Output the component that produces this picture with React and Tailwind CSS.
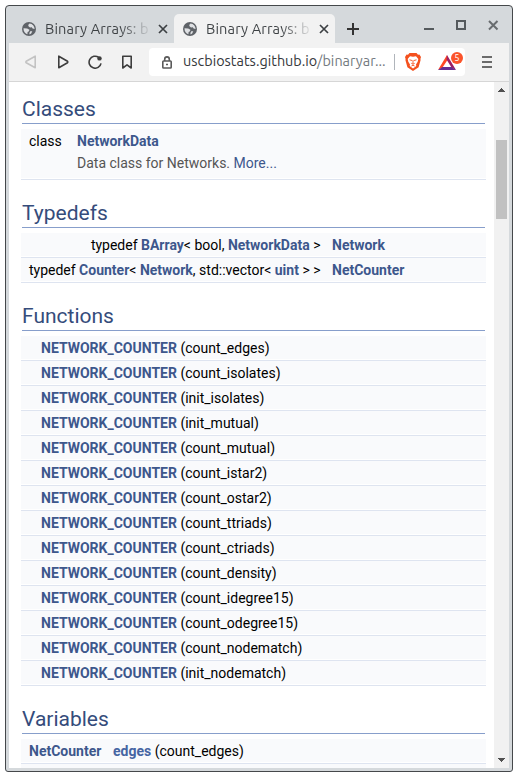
import React from "react";

const functions = [
  "count_edges", "count_isolates", "init_isolates", "init_mutual", "count_mutual",
  "count_istar2", "count_ostar2", "count_ttriads", "count_ctriads", "count_density",
  "count_idegree15", "count_odegree15", "count_nodematch", "init_nodematch",
];

function Globe() {
  return (
    <svg className="h-[14px] w-[14px] shrink-0" viewBox="0 0 14 14">
      <circle cx="7" cy="7" r="7" fill="#5f6368" />
      <path
        d="M7.500 1.500 6.200 3 6.500 4.200 8 5.400 9.800 5.300 10.600 6.600 12.600 6.900C12.500 4.400 10.600 1.700 7.500 1.500ZM1.500 6.300 5.200 6.500 7.400 7.700 7 9.300 5.600 10 5.400 12.300C3.300 11.600 1.300 9.500 1.500 6.300ZM8.200 9.200 10.300 9.300 9.200 11.600 7.600 12.500 7.400 10.900Z"
        fill="#dfe1e4"
      />
    </svg>
  );
}

function Tab({ active }) {
  return (
    <div className={"flex h-[29px] w-[161px] items-center pl-[9px] " + (active ? "rounded-t-[5px] bg-[#f2f2f2]" : "")}>
      <Globe />
      <div className="ml-[9px] w-[107px] shrink-0 whitespace-nowrap bg-linear-to-r from-[#3c4043] from-70% to-transparent to-100% bg-clip-text font-['Ubuntu','Noto_Sans',sans-serif] text-[14.6px] leading-[22px] tracking-[0.12px] text-transparent">
        Binary Arrays: b
      </div>
      <svg className="ml-[6px] h-[10px] w-[10px] shrink-0" viewBox="0 0 10 10">
        <path d="M1 1l8 8M9 1l-8 8" stroke="#3c4043" strokeWidth="1.7" />
      </svg>
    </div>
  );
}

function TitleBar() {
  return (
    <div className="flex h-[37px] shrink-0 items-end bg-[#d5d9dc] pl-[4px]">
      <Tab />
      <Tab active />
      <svg className="mb-[8px] ml-[12px] h-[12px] w-[12px]" viewBox="0 0 12 12">
        <path d="M6 0v12M0 6h12" stroke="#333" strokeWidth="2" />
      </svg>
      <svg className="mb-[12px] ml-[65px] h-[12px] w-[76px]" viewBox="0 0 76 12">
        <path d="M0 10h10" stroke="#555a5d" strokeWidth="2" />
        <rect x="33" y="2" width="8" height="8" fill="none" stroke="#555a5d" strokeWidth="2" />
        <path d="M65 2l8.500 8.500M73.500 2l-8.500 8.500" stroke="#686c6f" strokeWidth="2" />
      </svg>
    </div>
  );
}

function Toolbar() {
  return (
    <div className="flex h-[38px] shrink-0 items-center bg-[#f2f2f2] pl-[16px]">
      <svg className="h-[14px] w-[108px] shrink-0" viewBox="0 0 108 14" fill="none" strokeWidth="1.6" strokeLinejoin="round">
        <path d="M10.200 1.200V12.800L1.200 7.800Q.5 7 1.200 6.200Z" stroke="#c3c3c3" />
        <path d="M33.800 1.200V12.800L42.500 7.800Q43.200 7 42.500 6.200Z" stroke="#3e3e3e" />
        <path d="M76 8.300A6 6 0 1 1 73.700 2.400" stroke="#3e3e3e" />
        <circle cx="74.500" cy="3.400" r="2.200" fill="#3e3e3e" />
        <path d="M97.800 1.200H106.200V13L102 9.900 97.800 13Z" stroke="#3e3e3e" />
      </svg>
      <div className="ml-[16px] flex h-[28px] w-[316px] shrink-0 items-center rounded-[4px] bg-white pl-[13px]">
        <svg className="h-[13px] w-[10px] shrink-0" viewBox="0 0 10 13" fill="none" stroke="#5a5a5a" strokeWidth="1.600">
          <rect x=".8" y="5" width="8.400" height="7" rx=".8" />
          <path d="M2.700 5V3.200a2.300 2.300 0 0 1 4.600 0V5" />
          <path d="M4 8.500h2" />
        </svg>
        <div className="ml-[11px] w-[207px] shrink-0 whitespace-nowrap font-['Ubuntu','Noto_Sans',sans-serif] text-[14.4px] tracking-[0.02px] text-[#747a80]">
          <span className="text-[#35383b]">uscbiostats.github.io</span>/binaryar...
        </div>
        <div className="ml-[4px] h-[16px] w-px shrink-0 bg-[#b0b5bb]" />
        <svg className="ml-[10px] h-[18px] w-[16px] shrink-0" viewBox="0 0 16 18">
          <path d="M4.500 0h7L13 1.700l1.400-.2L16 4l-.6 2 .2 1-2 7.200L8 18l-5.600-3.800L.4 7l.2-1L0 4l1.600-2.500 1.400.2Z" fill="#f4511e" />
          <path d="M5 3.200 8 3.800 11 3.200 13.300 5.900 12.700 8.700 11 11.600 11.300 13 8 15.500 4.700 13 5 11.600 3.300 8.700 2.700 5.900Z" fill="#fff" />
          <path d="M4.500 6.800 7 7.500M11.500 6.800 9 7.500M8 7v4M6.300 10.300 8 11.300 9.700 10.300M6.400 13 8 12.200 9.600 13" stroke="#f4511e" strokeWidth=".9" fill="none" />
        </svg>
        <div className="relative ml-[17px] h-[20px] w-[26px] shrink-0">
          <svg className="h-[20px] w-[26px]" viewBox="0 0 26 20">
            <path d="M9 3 0 18 4.500 15.500 9.500 8Z" fill="#ff4724" />
            <path d="M9 3 18 18 13.500 15.500 8.500 7.500Z" fill="#9e1f63" />
            <path d="M0 18 4.300 15H13.700L18 18Z" fill="#662d91" />
          </svg>
          <div className="absolute left-[13px] top-0 flex h-[12px] w-[12px] items-center justify-center rounded-full bg-[#fb542b] font-['Noto_Sans',sans-serif] text-[8px] leading-none text-white">5</div>
        </div>
      </div>
      <div className="ml-[17px] flex w-[10px] flex-col gap-[3px]">
        <div className="h-[2px] bg-[#6b6b6b]" />
        <div className="h-[2px] bg-[#6b6b6b]" />
        <div className="h-[2px] bg-[#6b6b6b]" />
      </div>
    </div>
  );
}

function Heading({ children, first }) {
  return (
    <h2 className={"mx-px mb-[5px] border-b border-[#879ecb] pb-px text-[21px] leading-[25px] text-[#354c7b] " + (first ? "mt-[15px]" : "mt-[21px]")}>
      {children}
    </h2>
  );
}

function Row({ children, tall }) {
  return (
    <div className="border-b border-[#dee4f0] pb-px">
      <div className={"whitespace-pre bg-[#f9fafc] pt-px text-[14px] leading-[22px] " + (tall ? "h-[49px]" : "flex h-[23px]")}>{children}</div>
    </div>
  );
}

function L({ children }) {
  return <b className="font-bold text-[#3d578c]">{children}</b>;
}

function Docs() {
  return (
    <div className="h-full min-w-0 flex-1 overflow-hidden bg-white pl-[12px] pr-[8px] text-black">
      <Heading first>Classes</Heading>
      <Row tall>
        <div className="flex">
          <div className="ml-[8px] w-[48px]">class</div>
          <div>
            <L>NetworkData</L>
            <div className="text-[#555]">Data class for Networks. <span className="text-[#3d578c]">More...</span></div>
          </div>
        </div>
      </Row>
      <Heading>Typedefs</Heading>
      <Row>
        <div className="w-[299.500px] text-right">typedef <L>BArray</L>{"< bool, "}<L>NetworkData</L>{" >"}</div>
        <div className="ml-[11.500px]"><L>Network</L></div>
      </Row>
      <Row>
        <div className="w-[299.500px] text-right">typedef <L>Counter</L>{"< "}<L>Network</L>{", std::vector< "}<L>uint</L>{" > >"}</div>
        <div className="ml-[11.500px]"><L>NetCounter</L></div>
      </Row>
      <Heading>Functions</Heading>
      {functions.map((name) => (
        <Row key={name}>
          <div className="ml-[20px]"><L>NETWORK_COUNTER</L> ({name})</div>
        </Row>
      ))}
      <Heading>Variables</Heading>
      <Row>
        <div className="ml-[8px] w-[84px]"><L>NetCounter</L></div>
        <div><b className="text-[#4665a2]">edges</b> (count_edges)</div>
      </Row>
      <Row />
    </div>
  );
}

function Scrollbar() {
  return (
    <div className="flex h-full w-[15px] shrink-0 flex-col items-center bg-[#f1f1f1]">
      <svg className="mt-[6px] h-[4px] w-[7px] shrink-0" viewBox="0 0 7 4" shapeRendering="crispEdges">
        <path d="M3 0h1v1h1v1h1v1h1v1H0V3h1V2h1V1h1Z" fill="#505050" />
      </svg>
      <div className="mt-[48px] h-[79px] w-[11px] bg-[#c1c1c1]" />
      <svg className="mb-[6px] mt-auto h-[4px] w-[7px] shrink-0" viewBox="0 0 7 4" shapeRendering="crispEdges">
        <path d="M0 0h7v1H6v1H5v1H4v1H3V3H2V2H1V1H0Z" fill="#505050" />
      </svg>
    </div>
  );
}

export default function App() {
  return (
    <div className="h-[781px] w-[522px] overflow-hidden bg-white pl-[5px] pt-[5px] font-['Roboto',sans-serif]">
      <div className="flex h-[767px] w-[508px] flex-col overflow-hidden rounded-[4px] rounded-b-[3px] border border-[#45484b] bg-[#d5d9dc] px-[3px] pb-[3px]">
        <TitleBar />
        <Toolbar />
        <div className="h-px shrink-0 bg-[#d6d6d6]" />
        <div className="flex min-h-0 flex-1">
          <Docs />
          <Scrollbar />
        </div>
      </div>
    </div>
  );
}
